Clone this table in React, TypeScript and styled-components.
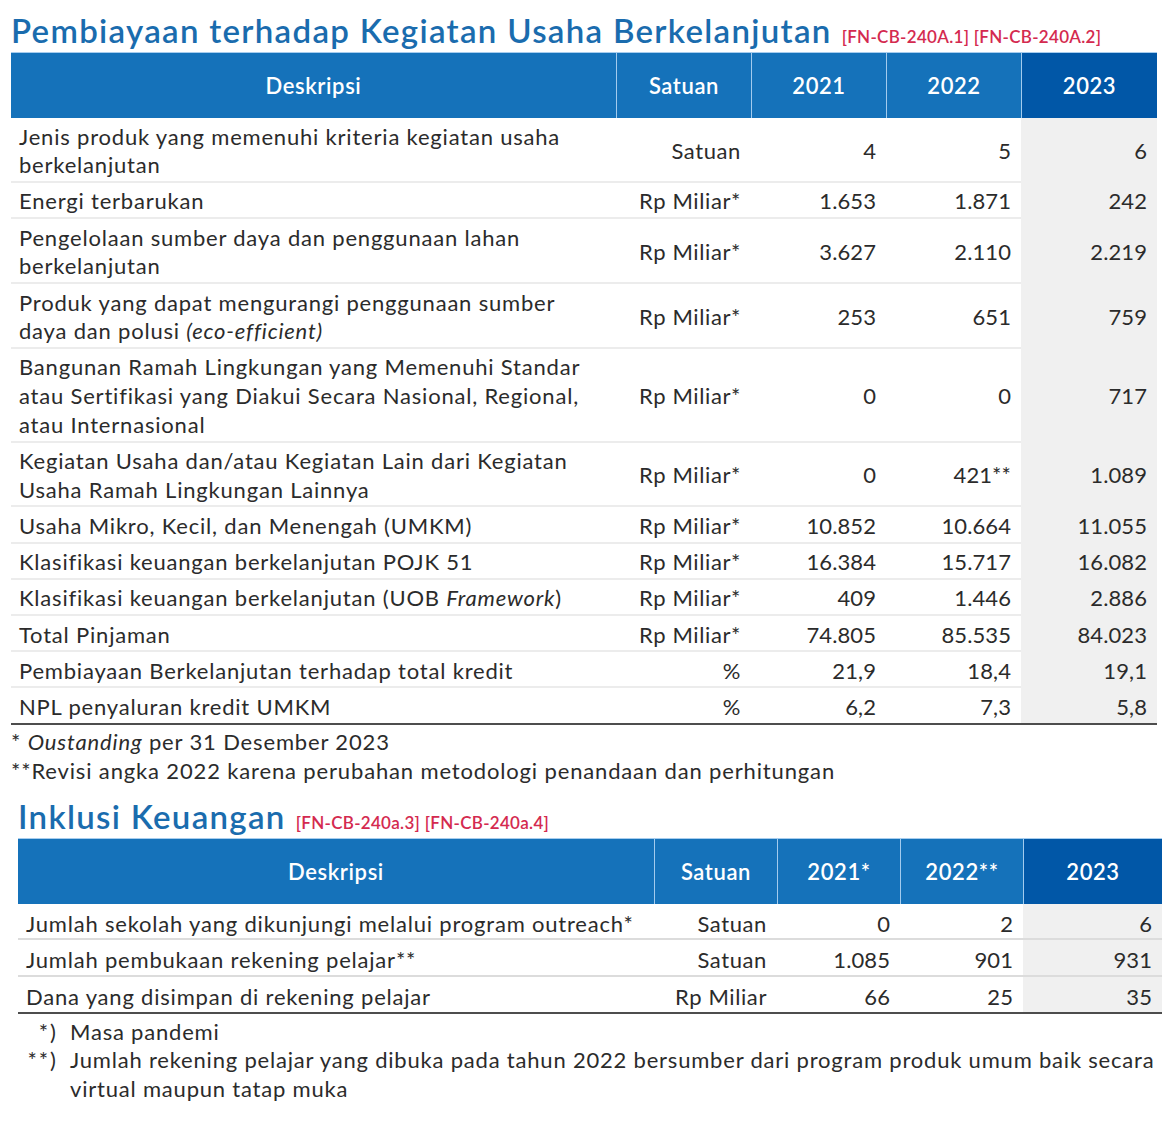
import React from "react";
import styled, { createGlobalStyle } from "styled-components";

const GlobalStyle = createGlobalStyle`
  html, body { margin: 0; padding: 0; background: #ffffff; }
  body { font-family: Lato, "Noto Sans", "Liberation Sans", sans-serif; color: #2b2b2b; }
`;

const Page = styled.div`
  width: 1170px;
  padding: 10px 0 0 11px;
  box-sizing: border-box;
`;

const Section = styled.section<{ $indent?: number }>`
  margin-left: ${(p) => p.$indent ?? 0}px;
`;

const TitleRow = styled.div`
  display: flex;
  align-items: baseline;
  gap: 10px;
  height: 42px;
  white-space: nowrap;
`;

const Title = styled.h2`
  margin: 0;
  font-family: Lato, "Noto Sans", sans-serif;
  font-weight: 600;
  font-size: 33px;
  line-height: 40px;
  letter-spacing: 1.3px;
  color: #1a6cae;
`;

const Tag = styled.span`
  font-size: 17px;
  font-weight: 600;
  letter-spacing: 0.3px;
  color: #d42a4f;
`;

const Table = styled.table<{ $width: number }>`
  width: ${(p) => p.$width}px;
  border-collapse: separate;
  border-spacing: 0;
  table-layout: fixed;
  font-size: 22px;
`;

const HeadCell = styled.th<{ $current?: boolean; $first?: boolean }>`
  height: 66px;
  padding: 0;
  box-sizing: border-box;
  background: ${(p) => (p.$current ? "#0157a7" : "#1572ba")};
  border-top: 1px solid #a7cdee;
  border-left: ${(p) => (p.$first ? "none" : "1px solid #a3cbee")};
  color: #ffffff;
  font-weight: 600;
  font-size: 22px;
  letter-spacing: 0.6px;
  text-align: center;
  vertical-align: middle;
`;

const Cell = styled.td<{
  $kind: "desc" | "unit" | "num";
  $current?: boolean;
  $last?: boolean;
  $variant: "a" | "b";
}>`
  padding: ${(p) => (p.$variant === "a" ? "4.5px" : "6px")}
    ${(p) => (p.$kind === "desc" ? "8px" : "10px")}
    ${(p) => (p.$variant === "a" ? "1px" : "0px")};
  line-height: 28.7px;
  letter-spacing: ${(p) =>
    p.$kind === "desc" ? "0.8px" : p.$kind === "unit" ? "0.6px" : "0.1px"};
  text-align: ${(p) => (p.$kind === "desc" ? "left" : "right")};
  vertical-align: middle;
  background: ${(p) => (p.$current ? "#f0f0f0" : "#ffffff")};
  border-bottom: 2px solid
    ${(p) =>
      p.$last
        ? "#4d4d4d"
        : p.$variant === "a"
        ? p.$current
          ? "#f0f0f0"
          : "#ececec"
        : "#dcdcdc"};
`;

const Notes = styled.div`
  font-size: 22px;
  line-height: 29px;
  letter-spacing: 0.85px;
  padding-top: 2px;
`;

const NoteGrid = styled.div`
  display: grid;
  grid-template-columns: 40px 1fr;
  column-gap: 12px;
  font-size: 22px;
  line-height: 28.5px;
  letter-spacing: 0.8px;
  padding-top: 4px;
`;

const Marker = styled.span`
  text-align: right;
  letter-spacing: 2px;
`;

const Spacer = styled.div`
  height: 11px;
`;

type Row = {
  d: React.ReactNode;
  u: string;
  v: [string, string, string];
};

const rows1: Row[] = [
  { d: <>Jenis produk yang memenuhi kriteria kegiatan usaha<br />berkelanjutan</>, u: "Satuan", v: ["4", "5", "6"] },
  { d: "Energi terbarukan", u: "Rp Miliar*", v: ["1.653", "1.871", "242"] },
  { d: <>Pengelolaan sumber daya dan penggunaan lahan<br />berkelanjutan</>, u: "Rp Miliar*", v: ["3.627", "2.110", "2.219"] },
  { d: <>Produk yang dapat mengurangi penggunaan sumber<br />daya dan polusi <i>(eco-efficient)</i></>, u: "Rp Miliar*", v: ["253", "651", "759"] },
  { d: <>Bangunan Ramah Lingkungan yang Memenuhi Standar<br />atau Sertifikasi yang Diakui Secara Nasional, Regional,<br />atau Internasional</>, u: "Rp Miliar*", v: ["0", "0", "717"] },
  { d: <>Kegiatan Usaha dan/atau Kegiatan Lain dari Kegiatan<br />Usaha Ramah Lingkungan Lainnya</>, u: "Rp Miliar*", v: ["0", "421**", "1.089"] },
  { d: "Usaha Mikro, Kecil, dan Menengah (UMKM)", u: "Rp Miliar*", v: ["10.852", "10.664", "11.055"] },
  { d: "Klasifikasi keuangan berkelanjutan POJK 51", u: "Rp Miliar*", v: ["16.384", "15.717", "16.082"] },
  { d: <>Klasifikasi keuangan berkelanjutan (UOB <i>Framework</i>)</>, u: "Rp Miliar*", v: ["409", "1.446", "2.886"] },
  { d: "Total Pinjaman", u: "Rp Miliar*", v: ["74.805", "85.535", "84.023"] },
  { d: "Pembiayaan Berkelanjutan terhadap total kredit", u: "%", v: ["21,9", "18,4", "19,1"] },
  { d: "NPL penyaluran kredit UMKM", u: "%", v: ["6,2", "7,3", "5,8"] },
];

const rows2: Row[] = [
  { d: "Jumlah sekolah yang dikunjungi melalui program outreach*", u: "Satuan", v: ["0", "2", "6"] },
  { d: "Jumlah pembukaan rekening pelajar**", u: "Satuan", v: ["1.085", "901", "931"] },
  { d: "Dana yang disimpan di rekening pelajar", u: "Rp Miliar", v: ["66", "25", "35"] },
];

function DataTable({
  rows,
  cols,
  years,
  variant,
}: {
  rows: Row[];
  cols: number[];
  years: [string, string, string];
  variant: "a" | "b";
}) {
  const width = cols.reduce((a, b) => a + b, 0);
  return (
    <Table $width={width}>
      <colgroup>
        {cols.map((w, i) => (
          <col key={i} style={{ width: w }} />
        ))}
      </colgroup>
      <thead>
        <tr>
          <HeadCell $first>Deskripsi</HeadCell>
          <HeadCell>Satuan</HeadCell>
          <HeadCell>{years[0]}</HeadCell>
          <HeadCell>{years[1]}</HeadCell>
          <HeadCell $current>{years[2]}</HeadCell>
        </tr>
      </thead>
      <tbody>
        {rows.map((r, i) => {
          const last = i === rows.length - 1;
          return (
            <tr key={i}>
              <Cell $variant={variant} $last={last} $kind="desc">{r.d}</Cell>
              <Cell $variant={variant} $last={last} $kind="unit">{r.u}</Cell>
              <Cell $variant={variant} $last={last} $kind="num">{r.v[0]}</Cell>
              <Cell $variant={variant} $last={last} $kind="num">{r.v[1]}</Cell>
              <Cell $variant={variant} $last={last} $kind="num" $current>{r.v[2]}</Cell>
            </tr>
          );
        })}
      </tbody>
    </Table>
  );
}

export default function App() {
  return (
    <>
      <GlobalStyle />
      <Page>
        <Section>
          <TitleRow>
            <Title>Pembiayaan terhadap Kegiatan Usaha Berkelanjutan</Title>
            <Tag>[FN-CB-240A.1] [FN-CB-240A.2]</Tag>
          </TitleRow>
          <DataTable
            rows={rows1}
            cols={[605, 135, 135, 135, 136]}
            years={["2021", "2022", "2023"]}
            variant="a"
          />
          <Notes>
            <div>* <i>Oustanding</i> per 31 Desember 2023</div>
            <div>**Revisi angka 2022 karena perubahan metodologi penandaan dan perhitungan</div>
          </Notes>
        </Section>
        <Spacer />
        <Section $indent={7}>
          <TitleRow>
            <Title>Inklusi Keuangan</Title>
            <Tag>[FN-CB-240a.3] [FN-CB-240a.4]</Tag>
          </TitleRow>
          <DataTable
            rows={rows2}
            cols={[636, 123, 123, 123, 139]}
            years={["2021*", "2022**", "2023"]}
            variant="b"
          />
          <NoteGrid>
            <Marker>*)</Marker>
            <span>Masa pandemi</span>
            <Marker>**)</Marker>
            <span>
              Jumlah rekening pelajar yang dibuka pada tahun 2022 bersumber dari program produk umum baik secara
              <br />
              virtual maupun tatap muka
            </span>
          </NoteGrid>
        </Section>
      </Page>
    </>
  );
}
